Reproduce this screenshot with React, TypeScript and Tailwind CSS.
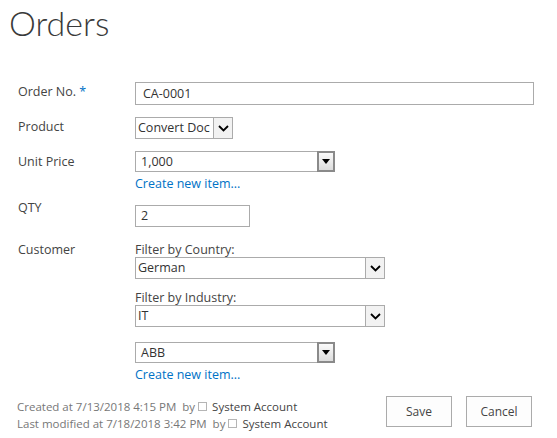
import React from 'react';

const font = { fontFamily: '"Open Sans", "Noto Sans", sans-serif' };

const Chevron: React.FC = () => (
    <svg width="11" height="7" viewBox="0 0 11 7" fill="none">
        <path d="M1 1l4.5 4.5L10 1" stroke="#000" strokeWidth="1.8" />
    </svg>
);

const Triangle: React.FC = () => (
    <svg width="8" height="5" viewBox="0 0 8 5">
        <path d="M0 0h8L4 5z" fill="#000" />
    </svg>
);

// dropdown with a chevron box on the right, as in IE
const ChevronSelect: React.FC<{ value: string; className: string }> = ({ value, className }) => (
    <div className={`flex border border-[#ababab] bg-white ${className}`}>
        <span className="flex-1 truncate pl-[2px] leading-[20px] text-[12.5px] text-[#333]">{value}</span>
        <span className="w-[19px] flex items-center justify-center border-l border-[#ababab] bg-[#f2f2f2]">
            <Chevron />
        </span>
    </div>
);

// lookup dropdown: text box plus separate gray button with small triangle
const LookupSelect: React.FC<{ value: string }> = ({ value }) => (
    <div className="flex items-stretch">
        <div className="w-[183px] h-[21px] border border-[#ababab] bg-white pl-[5px] text-[12.5px] leading-[19px] text-[#333]">
            {value}
        </div>
        <div className="w-[18px] h-[21px] -ml-px border-2 border-[#8a8a8a] bg-gradient-to-b from-[#fafafa] to-[#dcdcdc] flex items-center justify-center">
            <Triangle />
        </div>
    </div>
);

const Link: React.FC = () => (
    <a className="block mt-[4px] text-[12.5px] leading-[16px] text-[#0072c6]">Create new item...</a>
);

const Square: React.FC = () => (
    <span className="inline-block w-[9px] h-[9px] border border-[#b5b5b5] ml-[3px] mr-[5px]" />
);

export default function App() {
    return (
        <div className="w-[557px] h-[438px] bg-white text-[#444] overflow-hidden" style={font}>
            <h1
                className="pl-[9px] text-[34px] font-light leading-[46px] text-[#3a3a3a]"
                style={{ fontFamily: 'Lato, "Open Sans", sans-serif' }}
            >
                Orders
            </h1>

            <div className="mt-[36px] grid grid-cols-[135px_1fr] text-[12.5px] leading-[16px]">
                <div className="pl-[18px] pt-[2px]">
                    Order No. <span className="text-[#0072c6]">*</span>
                </div>
                <div>
                    <div className="w-[399px] h-[23px] border border-[#ababab] pl-[7px] leading-[21px] text-[#333]">CA-0001</div>
                </div>

                <div className="pl-[18px] pt-[2px] mt-[12px]">Product</div>
                <div className="mt-[12px]">
                    <ChevronSelect value="Convert Doc" className="w-[98px] h-[22px]" />
                </div>

                <div className="pl-[18px] pt-[3px] mt-[12px]">Unit Price</div>
                <div className="mt-[12px]">
                    <LookupSelect value="1,000" />
                    <Link />
                </div>

                <div className="pl-[18px] mt-[8px]">QTY</div>
                <div className="mt-[13px]">
                    <div className="w-[115px] h-[22px] border border-[#ababab] pl-[5px] leading-[20px] text-[#333]">2</div>
                </div>

                <div className="pl-[18px] mt-[15px]">Customer</div>
                <div className="mt-[15px]">
                    <div className="leading-[15px]">Filter by Country:</div>
                    <ChevronSelect value="German" className="w-[250px] h-[22px]" />
                    <div className="mt-[11px] leading-[15px]">Filter by Industry:</div>
                    <ChevronSelect value="IT" className="w-[250px] h-[22px]" />
                    <div className="mt-[15px]">
                        <LookupSelect value="ABB" />
                    </div>
                    <Link />
                </div>
            </div>

            <div className="mt-[13px] flex items-start">
                <div className="pl-[17px] pt-[2px] text-[11.5px] leading-[17px] text-[#777]">
                    <div className="flex items-center">
                        Created at 7/13/2018 4:15 PM&nbsp;&nbsp;by
                        <Square />
                        <span className="text-[#444]">System Account</span>
                    </div>
                    <div className="flex items-center">
                        Last modified at 7/18/2018 3:42 PM&nbsp;&nbsp;by
                        <Square />
                        <span className="text-[#444]">System Account</span>
                    </div>
                </div>
                <div className="ml-auto mr-[25px] flex gap-[14px]">
                    <button className="w-[66px] h-[31px] border border-[#ababab] bg-[#fdfdfd] text-[12px] text-[#444]">Save</button>
                    <button className="w-[66px] h-[31px] border border-[#ababab] bg-[#fdfdfd] text-[12px] text-[#444]">Cancel</button>
                </div>
            </div>
        </div>
    );
}
